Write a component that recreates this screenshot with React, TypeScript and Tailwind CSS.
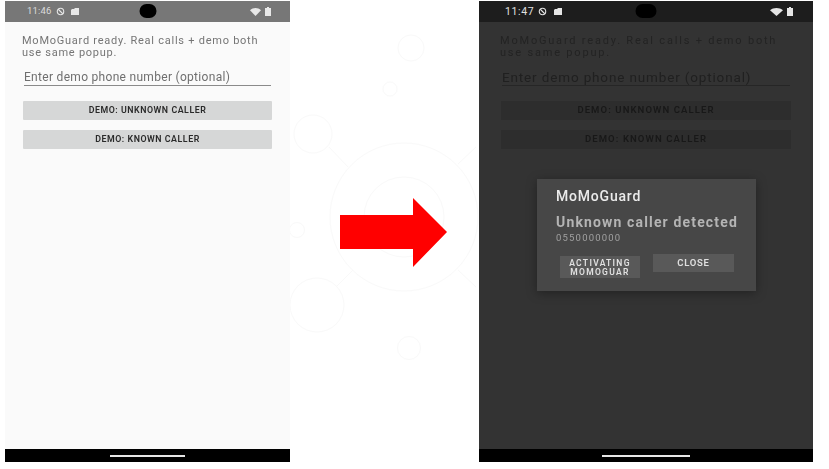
import React from 'react'

type TPhoneProps = {
  time: string
  dark?: boolean
  children?: React.ReactNode
}

function Phone({ time, dark, children }: TPhoneProps) {
  const barIcon = dark ? "#e5e5e5" : "#e8e8e8"
  const page = dark ? "bg-[#333333]" : "bg-[#fafafa]"
  const copy = dark ? "text-[#232323] text-[11px] tracking-[1.8px]" : "text-[#757575] text-[11px] tracking-[0.75px]"
  const hint = dark ? "text-[#202020] text-[13.5px] tracking-[0.85px]" : "text-[#6f6f6f] text-[12px] tracking-[0.3px]"
  const line = dark ? "border-[#262626]" : "border-[#8a8a8a]"
  const btn = dark ? "bg-[#2d2d2d] text-[#181818] text-[9.5px] tracking-[1.1px]" : "bg-[#d6d7d7] text-[#2a2a2a] text-[8.8px] tracking-[0.55px]"

  return (
    <div className={`relative flex flex-col h-[461px] mt-px w-full ${page}`}>
      <div className={`flex items-center h-[21px] shrink-0 relative ${dark ? "bg-[#1d1d1d] pl-[26px] pr-[20px]" : "bg-[#777777] pl-[22px] pr-[19px]"}`}>
        <span className={`mr-1 ${dark ? "text-[10.5px] tracking-[0.6px] text-[#e0e0e0]" : "text-[9.5px] tracking-[0.2px] text-[#dcdcdc]"}`}>{time}</span>
        <svg width="9" height="9" viewBox="0 0 10 10" fill="none" stroke={barIcon} strokeWidth="1.2">
          <circle cx="5" cy="5" r="3.6" />
          <path d="M2.5 2.5l5 5" />
        </svg>
        <svg className={dark ? "ml-[7px]" : "ml-[6px]"} width="8" height="7" viewBox="0 0 8 7" fill={barIcon}>
          <path d="M1 1h2l1-1h4v7H0V2z" />
        </svg>
        <div className={`absolute top-[3px] left-1/2 -translate-x-1/2 rounded-full bg-black ${dark ? "w-[21px] h-[14px]" : "w-[17px] h-[14px]"}`} />
        <div className="ml-auto flex items-center gap-[4px]">
          <svg width={dark ? 13 : 11} height="8" viewBox="0 0 11 8" preserveAspectRatio="none" fill={barIcon}>
            <path d="M0 2.2C3-.6 8-.6 11 2.2L5.5 8z" />
          </svg>
          <svg width="6" height="9" viewBox="0 0 6 9" fill={barIcon}>
            <path d="M2 0h2v1h2v8H0V1h2z" />
          </svg>
        </div>
      </div>
      <div className={`flex-1 flex flex-col blur-[0.3px] ${dark ? "px-[21px]" : "px-[17px]"}`}>
        <p className={`mt-[13px] leading-[12px] whitespace-nowrap ${copy}`}>MoMoGuard ready. Real calls + demo both<br />use same popup.</p>
        <div className={`mt-[12px] mx-[2px] border-b pb-[1px] leading-[13px] whitespace-nowrap ${line} ${hint}`}>Enter demo phone number (optional)</div>
        <button className={`mt-[15px] mx-[1px] h-[19px] rounded-[1px] font-semibold ${btn}`}>DEMO: UNKNOWN CALLER</button>
        <button className={`mt-[10px] mx-[1px] h-[19px] rounded-[1px] font-semibold ${btn}`}>DEMO: KNOWN CALLER</button>
      </div>
      <div className="h-[13px] shrink-0 bg-black flex items-center justify-center">
        <div className={`h-[2px] bg-[#e6e6e6] ${dark ? "w-[88px]" : "w-[75px]"}`} />
      </div>
      {children}
    </div>
  )
}

function Backdrop() {
  return (
    <svg className="absolute left-0 top-0" width="189" height="350" viewBox="0 0 189 350" fill="none" stroke="#f9f9f9" strokeWidth="1">
      <circle cx="121" cy="28" r="13" />
      <circle cx="100" cy="69" r="7" />
      <circle cx="23" cy="114" r="19" />
      <circle cx="114" cy="197" r="74" />
      <circle cx="114" cy="197" r="40" />
      <circle cx="7" cy="210" r="7.5" />
      <circle cx="27" cy="285" r="27" />
      <circle cx="119" cy="328" r="11.5" />
      <path d="M39 127l19 20M47 266l16-16M168 144l18-17M168 250l18 17" />
    </svg>
  )
}

export default function App() {
  return (
    <main className="flex w-[829px] h-[469px] bg-white overflow-hidden font-['Roboto',sans-serif]">
      <section className="ml-[5px] w-[285px] shrink-0">
        <Phone time="11:46" />
      </section>

      <section className="relative w-[189px] shrink-0 mt-[20px]">
        <Backdrop />
        <svg className="relative mt-[178px] ml-[50px]" width="107" height="69" viewBox="0 0 107 69">
          <path d="M0 17h73V0l34 34-34 35V51H0z" fill="#ff0000" />
        </svg>
      </section>

      <section className="w-[334px] shrink-0">
        <Phone time="11:47" dark>
          <div className="absolute left-[58px] top-[178px] w-[219px] h-[112px] bg-[#474747] shadow-[0_2px_10px_rgba(0,0,0,0.35)] px-[19px] blur-[0.3px]">
            <h2 className="mt-[9px] text-[14px] leading-[16px] font-medium tracking-[0.8px] text-[#ececec]">MoMoGuard</h2>
            <p className="mt-[10px] text-[14px] leading-[16px] font-bold tracking-[1.15px] whitespace-nowrap text-[#b4b4b4]">Unknown caller detected</p>
            <p className="mt-[2px] text-[9.5px] leading-[12px] tracking-[1.2px] text-[#a0a0a0]">0550000000</p>
            <div className="flex items-start mt-[10px] ml-[4px]">
              <div className="mt-[2px] w-[80px] h-[22px] bg-[#595959] text-center text-[8.5px] leading-[9.5px] pt-[2.5px] font-semibold tracking-[1.3px] text-[#e0e0e0]">ACTIVATING<br />MOMOGUAR</div>
              <div className="ml-[13px] w-[81px] h-[18px] bg-[#595959] text-center text-[9.5px] leading-[18px] font-semibold tracking-[0.7px] text-[#e0e0e0]">CLOSE</div>
            </div>
          </div>
        </Phone>
      </section>
    </main>
  )
}
